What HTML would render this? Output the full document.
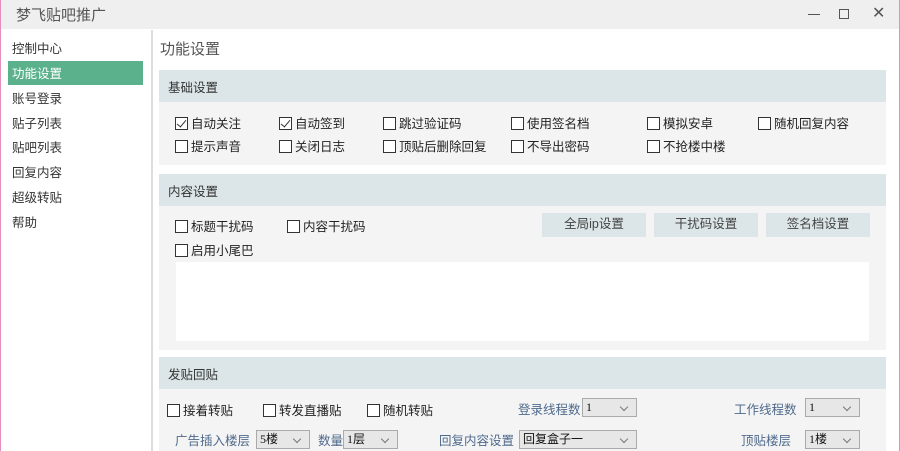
<!DOCTYPE html>
<html><head><meta charset="utf-8"><style>
*{margin:0;padding:0;box-sizing:border-box}
body{width:900px;height:451px;overflow:hidden;background:#fff;font-family:"Liberation Sans","Noto Sans CJK SC",sans-serif;font-size:12.5px;color:#222;position:relative}
.a{position:absolute;white-space:nowrap}
.tb{left:0;top:0;width:900px;height:29px;background:#efefef}
.side{font-size:12.5px;color:#333}
.hd{background:#dce6e8;left:159px;width:727px;height:32px;padding:7px 0 0 9px;color:#333}
.bd{background:#f4f4f4;left:159px;width:727px}
.cb{display:inline-block;width:13px;height:13px;border:1px solid #333;vertical-align:-2px;margin-right:3px;position:relative;background:#fff}
.ck::after{content:"";position:absolute;left:3px;top:0px;width:4px;height:8px;border:solid #333;border-width:0 1.5px 1.5px 0;transform:rotate(40deg)}
.btn{background:#dce6e8;height:24px;width:104px;text-align:center;line-height:22px;color:#444}
.sel{background:#e7e7e7;border:1px solid #aaa;height:19px;font-size:12px;line-height:17px;padding-left:3px;color:#111;font-family:"Liberation Serif","Noto Sans CJK SC",serif}
.sel::after{content:"";position:absolute;right:9px;top:5px;width:5px;height:5px;border:solid #777;border-width:0 1px 1px 0;transform:rotate(45deg)}
.bl{color:#4f6a8c}
</style></head><body>
<div class="a tb"></div>
<div class="a" style="left:16px;top:4px;font-size:15px;color:#555">梦飞贴吧推广</div>
<div class="a" style="left:808px;top:14px;width:12px;height:1px;background:#555"></div>
<div class="a" style="left:839px;top:9px;width:10px;height:10px;border:1px solid #555"></div>
<div class="a" style="left:872px;top:3px;font-size:16px;color:#555">✕</div>
<div class="a" style="left:0;top:0;width:1px;height:451px;background:#e38fc0"></div>
<div class="a" style="left:899px;top:0;width:1px;height:451px;background:#e38fc0"></div>
<div class="a" style="left:151px;top:30px;width:2px;height:421px;background:#ddd"></div>
<div class="a side" style="left:12px;top:38px">控制中心</div>
<div class="a" style="left:8px;top:61px;width:135px;height:24px;background:#5bb18c"></div>
<div class="a side" style="left:12px;top:63px;color:#fff">功能设置</div>
<div class="a side" style="left:12px;top:88px">账号登录</div>
<div class="a side" style="left:12px;top:113px">贴子列表</div>
<div class="a side" style="left:12px;top:137px">贴吧列表</div>
<div class="a side" style="left:12px;top:162px">回复内容</div>
<div class="a side" style="left:12px;top:187px">超级转贴</div>
<div class="a side" style="left:12px;top:212px">帮助</div>
<div class="a" style="left:160px;top:38px;font-size:15px;color:#555">功能设置</div>

<div class="a hd" style="top:70px">基础设置</div>
<div class="a bd" style="top:102px;height:63px"></div>
<div class="a" style="left:175px;top:113px"><span class="cb ck"></span>自动关注</div>
<div class="a" style="left:279px;top:113px"><span class="cb ck"></span>自动签到</div>
<div class="a" style="left:383px;top:113px"><span class="cb"></span>跳过验证码</div>
<div class="a" style="left:511px;top:113px"><span class="cb"></span>使用签名档</div>
<div class="a" style="left:647px;top:113px"><span class="cb"></span>模拟安卓</div>
<div class="a" style="left:758px;top:113px"><span class="cb"></span>随机回复内容</div>
<div class="a" style="left:175px;top:136px"><span class="cb"></span>提示声音</div>
<div class="a" style="left:279px;top:136px"><span class="cb"></span>关闭日志</div>
<div class="a" style="left:383px;top:136px"><span class="cb"></span>顶贴后删除回复</div>
<div class="a" style="left:511px;top:136px"><span class="cb"></span>不导出密码</div>
<div class="a" style="left:647px;top:136px"><span class="cb"></span>不抢楼中楼</div>

<div class="a hd" style="top:174px">内容设置</div>
<div class="a bd" style="top:206px;height:144px"></div>
<div class="a" style="left:175px;top:216px"><span class="cb"></span>标题干扰码</div>
<div class="a" style="left:287px;top:216px"><span class="cb"></span>内容干扰码</div>
<div class="a" style="left:175px;top:240px"><span class="cb"></span>启用小尾巴</div>
<div class="a btn" style="left:542px;top:213px">全局ip设置</div>
<div class="a btn" style="left:654px;top:213px">干扰码设置</div>
<div class="a btn" style="left:766px;top:213px">签名档设置</div>
<div class="a" style="left:176px;top:262px;width:693px;height:79px;background:#fff"></div>

<div class="a hd" style="top:357px">发贴回贴</div>
<div class="a bd" style="top:389px;height:62px"></div>
<div class="a" style="left:167px;top:400px"><span class="cb"></span>接着转贴</div>
<div class="a" style="left:263px;top:400px"><span class="cb"></span>转发直播贴</div>
<div class="a" style="left:367px;top:400px"><span class="cb"></span>随机转贴</div>
<div class="a bl" style="left:518px;top:399px">登录线程数</div>
<div class="a sel" style="left:582px;top:398px;width:55px">1</div>
<div class="a bl" style="left:734px;top:399px">工作线程数</div>
<div class="a sel" style="left:805px;top:398px;width:55px">1</div>
<div class="a bl" style="left:175px;top:430px">广告插入楼层</div>
<div class="a sel" style="left:256px;top:430px;width:54px">5楼</div>
<div class="a bl" style="left:318px;top:430px">数量</div>
<div class="a sel" style="left:343px;top:430px;width:55px">1层</div>
<div class="a bl" style="left:439px;top:430px">回复内容设置</div>
<div class="a sel" style="left:519px;top:430px;width:118px">回复盒子一</div>
<div class="a bl" style="left:741px;top:430px">顶贴楼层</div>
<div class="a sel" style="left:805px;top:430px;width:55px">1楼</div>
</body></html>
